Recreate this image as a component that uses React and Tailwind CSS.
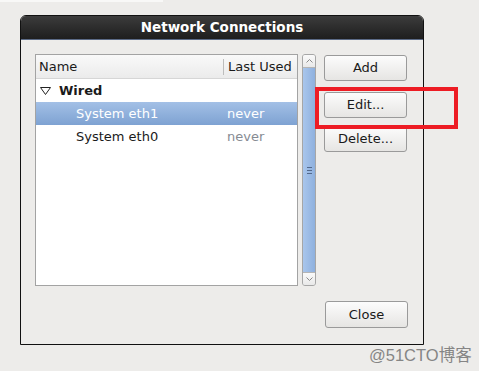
import React from 'react';

const font = { fontFamily: '"DejaVu Sans", "Noto Sans CJK SC", sans-serif' };

const Button = ({ label, className = '' }) => (
    <div className={`flex items-center justify-center w-[83px] h-[26px] rounded-[3px] border border-[#9a9a9a] bg-gradient-to-b from-[#fcfcfc] to-[#e6e5e3] text-[13px] text-[#1a1a1a] ${className}`}>
        {label}
    </div>
);

const App = () => {
    return (
        <div className="relative w-[479px] h-[371px] bg-[#edecea] overflow-hidden" style={font}>
            <div className="h-[2px] w-[163px] bg-[#f8f8f7]"></div>

            {/* Dialog window */}
            <div className="ml-[20px] mt-[13px] w-[404px] h-[330px] flex flex-col rounded-t-[6px] border border-[#111] bg-[#edecea]">
                {/* Title bar */}
                <div className="h-[24px] flex items-center justify-center rounded-t-[5px] bg-gradient-to-b from-[#3c3c3c] to-[#1e1e1e] border-b border-[#5b6a86]">
                    <span className="text-white font-bold text-[13.5px] leading-none">Network Connections</span>
                </div>

                <div className="flex flex-1 pl-[14px] pt-[14px] pr-[15px] pb-[16px]">
                    {/* Connection list */}
                    <div className="flex flex-col h-[232px] w-[264px] border border-[#a3a3a3] bg-white">
                        <div className="flex h-[24px] items-center border-b border-[#d6d6d6] bg-gradient-to-b from-[#f9f9f9] to-[#ebebeb] text-[13px] text-[#1a1a1a]">
                            <span className="pl-[3px] w-[187px]">Name</span>
                            <span className="h-[16px] border-l border-[#bdbdbd]"></span>
                            <span className="pl-[4px]">Last Used</span>
                        </div>
                        <div className="flex h-[23px] items-center text-[13px] text-[#1a1a1a]">
                            <svg width="11" height="8" viewBox="0 0 11 8" className="ml-[4px] mr-[8px]">
                                <path d="M0.5 0.5 H10.5 L5.5 7.5 Z" fill="none" stroke="#222" strokeWidth="1" />
                            </svg>
                            <span className="font-bold">Wired</span>
                        </div>
                        <div className="flex h-[23px] items-center text-[13px] text-white bg-gradient-to-b from-[#a3c0e6] to-[#7ea2d2]">
                            <span className="pl-[40px] w-[191px]">System eth1</span>
                            <span>never</span>
                        </div>
                        <div className="flex h-[23px] items-center text-[13px] text-[#1a1a1a]">
                            <span className="pl-[40px] w-[191px]">System eth0</span>
                            <span className="text-[#868b93]">never</span>
                        </div>
                    </div>

                    {/* Scrollbar */}
                    <div className="ml-[4px] w-[14px] h-[232px] flex flex-col rounded-[3px] border border-[#a6a6a6] bg-[#e4e4e4] overflow-hidden">
                        <div className="h-[13px] flex items-center justify-center bg-gradient-to-b from-[#fafafa] to-[#e9e9e9] border-b border-[#b5b5b5]">
                            <svg width="7" height="4" viewBox="0 0 7 4"><path d="M0.5 3.5 L3.5 0.5 L6.5 3.5" fill="none" stroke="#8a8a8a" strokeWidth="1" /></svg>
                        </div>
                        <div className="flex-1 flex items-center justify-center bg-gradient-to-r from-[#a9c6ec] to-[#8eb0de]">
                            <div className="flex flex-col gap-[2px]">
                                <div className="w-[5px] h-[1px] bg-[#53698c]"></div>
                                <div className="w-[5px] h-[1px] bg-[#53698c]"></div>
                                <div className="w-[5px] h-[1px] bg-[#53698c]"></div>
                            </div>
                        </div>
                        <div className="h-[13px] flex items-center justify-center bg-gradient-to-b from-[#fafafa] to-[#e9e9e9] border-t border-[#b5b5b5]">
                            <svg width="7" height="4" viewBox="0 0 7 4"><path d="M0.5 0.5 L3.5 3.5 L6.5 0.5" fill="none" stroke="#8a8a8a" strokeWidth="1" /></svg>
                        </div>
                    </div>

                    {/* Buttons */}
                    <div className="ml-[8px] flex flex-col">
                        <Button label="Add" className="mt-[1px]" />
                        <Button label="Edit..." className="mt-[11px] h-[25px]" />
                        <Button label="Delete..." className="mt-[8px] h-[25px]" />
                        <Button label="Close" className="mt-auto ml-[1px] h-[27px]" />
                    </div>
                </div>
            </div>

            {/* Red highlight annotation */}
            <div className="absolute left-[315px] top-[87px] w-[143px] h-[42px] border-[4px] border-[#ed1c24]"></div>

            {/* Watermark */}
            <div className="absolute left-[369px] top-[343px] text-[16.5px] text-[#858585]" style={{ fontFamily: '"Liberation Sans", "Noto Sans CJK SC", sans-serif' }}>
                @51CTO博客
            </div>
        </div>
    );
};

export default App;
